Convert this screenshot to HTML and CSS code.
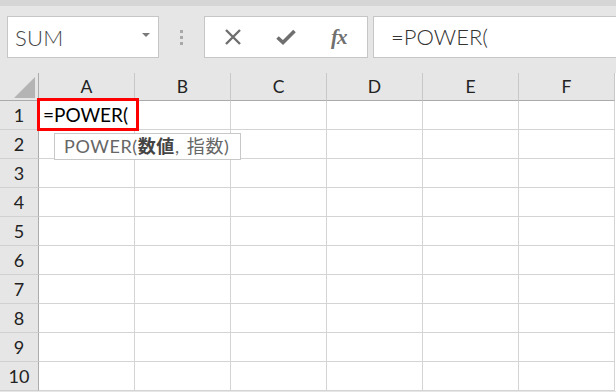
FILE: index.html
```html
<!DOCTYPE html>
<html>
<head>
<meta charset="utf-8">
<link rel="stylesheet" href="styles.css">
</head>
<body>
<div class="app">
  <div class="topstrip"></div>
  <div class="toolbar">
    <div class="namebox">
      <span class="name">SUM</span>
      <svg class="caret" width="8" height="4" viewBox="0 0 8 4"><path d="M0 0H8L4 4Z" fill="#7a7a7a"/></svg>
    </div>
    <div class="dots"><span></span><span></span><span></span></div>
    <div class="buttons">
      <svg class="ico" width="18" height="16" viewBox="0 0 18 16"><path d="M2 1L16 15M16 1L2 15" stroke="#6f6f6f" stroke-width="2.4" fill="none"/></svg>
      <svg class="ico" width="20" height="16" viewBox="0 0 20 16"><path d="M1.5 8.5L7 13.5L18.5 2" stroke="#6f6f6f" stroke-width="3.6" fill="none"/></svg>
      <span class="fx">fx</span>
    </div>
    <div class="formula">=POWER(</div>
  </div>
  <div class="sheet">
    <div class="corner"><span class="tri"></span></div>
    <div class="ch">A</div><div class="ch">B</div><div class="ch">C</div><div class="ch">D</div><div class="ch">E</div><div class="ch">F</div>

    <div class="rh">1</div><div class="cell"></div><div class="cell"></div><div class="cell"></div><div class="cell"></div><div class="cell"></div><div class="cell"></div>
    <div class="rh">2</div><div class="cell"></div><div class="cell"></div><div class="cell"></div><div class="cell"></div><div class="cell"></div><div class="cell"></div>
    <div class="rh">3</div><div class="cell"></div><div class="cell"></div><div class="cell"></div><div class="cell"></div><div class="cell"></div><div class="cell"></div>
    <div class="rh">4</div><div class="cell"></div><div class="cell"></div><div class="cell"></div><div class="cell"></div><div class="cell"></div><div class="cell"></div>
    <div class="rh">5</div><div class="cell"></div><div class="cell"></div><div class="cell"></div><div class="cell"></div><div class="cell"></div><div class="cell"></div>
    <div class="rh">6</div><div class="cell"></div><div class="cell"></div><div class="cell"></div><div class="cell"></div><div class="cell"></div><div class="cell"></div>
    <div class="rh">7</div><div class="cell"></div><div class="cell"></div><div class="cell"></div><div class="cell"></div><div class="cell"></div><div class="cell"></div>
    <div class="rh">8</div><div class="cell"></div><div class="cell"></div><div class="cell"></div><div class="cell"></div><div class="cell"></div><div class="cell"></div>
    <div class="rh">9</div><div class="cell"></div><div class="cell"></div><div class="cell"></div><div class="cell"></div><div class="cell"></div><div class="cell"></div>
    <div class="rh">10</div><div class="cell"></div><div class="cell"></div><div class="cell"></div><div class="cell"></div><div class="cell"></div><div class="cell"></div>

    <div class="editor">=POWER(</div>
    <div class="tip">POWER(<b>数値</b>, 指数)</div>
  </div>
</div>
</body>
</html>
```
FILE: styles.css
```css
* { box-sizing: border-box; }
html, body { margin: 0; padding: 0; }
body {
  width: 616px;
  height: 392px;
  overflow: hidden;
  background: #e6e6e6;
  font-family: Lato, "Noto Sans CJK JP", sans-serif;
}
.app { width: 616px; }
.topstrip { height: 6px; background: #d6d6d6; }
.toolbar {
  height: 67px;
  display: flex;
  align-items: flex-start;
  padding: 10px 0 0 7px;
}
.namebox {
  width: 152px;
  height: 42px;
  background: #fff;
  border: 1px solid #c6c6c6;
  display: flex;
  align-items: center;
  padding: 0 8px 0 7px;
  justify-content: space-between;
}
.name { font-size: 22px; font-weight: 300; color: #444; letter-spacing: 0.3px; }
.caret { margin-top: -4px; }
.dots {
  width: 45px;
  height: 42px;
  display: flex;
  flex-direction: column;
  align-items: center;
  justify-content: center;
  gap: 3px;
  padding-top: 1px;
}
.dots span { width: 3px; height: 3px; background: #a9a9a9; }
.buttons {
  width: 164px;
  height: 42px;
  background: #fff;
  border: 1px solid #c6c6c6;
  display: flex;
  align-items: center;
  padding-left: 19px;
  gap: 34px;
}
.fx {
  font-family: "Liberation Serif", serif;
  font-style: italic;
  font-weight: bold;
  font-size: 21px;
  color: #707070;
  margin-left: 1px;
  letter-spacing: -1px;
}
.formula {
  margin-left: 5px;
  flex: 1;
  height: 42px;
  background: #fff;
  border: 1px solid #c6c6c6;
  border-right: none;
  font-size: 22px;
  font-weight: 300;
  color: #333;
  padding-left: 17px;
  line-height: 40px;
}
.sheet {
  position: relative;
  display: grid;
  grid-template-columns: 39px repeat(6, 96px);
  grid-template-rows: 28px repeat(10, 29px);
  background: #fff;
}
.corner {
  background: #e6e6e6;
  border-right: 1px solid #ababab;
  border-bottom: 1px solid #ababab;
  position: relative;
}
.tri {
  position: absolute;
  right: 3px;
  bottom: 2px;
  width: 21px;
  height: 21px;
  background: #b4b4b4;
  clip-path: polygon(100% 0, 100% 100%, 0 100%);
}
.ch {
  background: #e6e6e6;
  border-right: 1px solid #c8c8c8;
  border-bottom: 1px solid #ababab;
  text-align: center;
  font-size: 17.5px;
  color: #222;
  line-height: 27px;
}
.rh {
  background: #e6e6e6;
  border-right: 1px solid #ababab;
  border-bottom: 1px solid #d0d0d0;
  text-align: center;
  font-size: 18px;
  color: #222;
  line-height: 29px;
}
.cell {
  border-right: 1px solid #d4d4d4;
  border-bottom: 1px solid #d4d4d4;
}
.editor {
  position: absolute;
  left: 37px;
  top: 25px;
  width: 102px;
  height: 33px;
  border: 3px solid #ff0000;
  background: #fff;
  font-size: 19px;
  color: #000;
  padding-left: 3px;
  line-height: 27px;
}
.tip {
  position: absolute;
  left: 54px;
  top: 60px;
  width: 187px;
  height: 27px;
  background: #fff;
  border: 1px solid #c8c8c8;
  font-size: 18px;
  color: #666;
  padding-left: 9px;
  line-height: 25px;
  letter-spacing: 0.6px;
  word-spacing: 2px;
  white-space: nowrap;
}
.tip b { color: #444; }
```
